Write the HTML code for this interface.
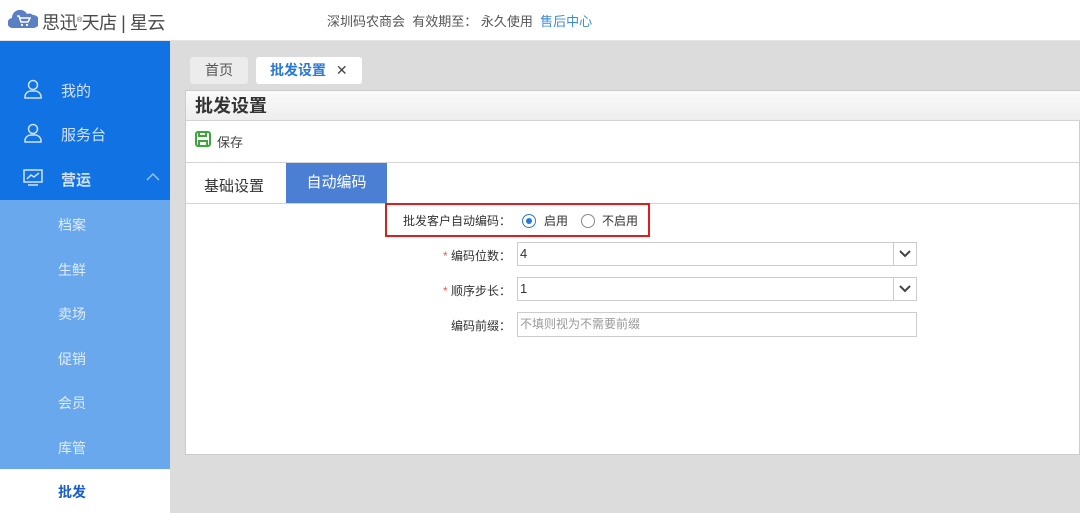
<!DOCTYPE html><html><head><meta charset="utf-8"><style>
*{margin:0;padding:0;box-sizing:border-box}
body{width:1080px;height:513px;overflow:hidden;font-family:"Liberation Sans","Noto Sans CJK SC",sans-serif;background:#dcdcdc;position:relative;color:#333}
.a{position:absolute}
.hdr{left:0;top:0;width:1080px;height:41px;background:#fff;border-bottom:1px solid #e4e4e4}
.side{left:0;top:41px;width:170px;height:472px;background:#1172e3}
.sub{left:0;top:200px;width:170px;height:269px;background:#6aa8ee}
.act{left:0;top:469px;width:170px;height:44px;background:#fff}
.mi{color:#cfe2fb;font-size:15px;left:61px}
.si{color:#e0ecfb;font-size:14px;left:58px}
.panel{left:185px;top:90px;width:895px;height:365px;background:#fff;border:1px solid #ccc}
</style></head><body>
<div class="a hdr"></div>
<svg class="a" style="left:8px;top:9px" width="30" height="20" viewBox="0 0 30 20"><path d="M5 19a5 5 0 0 1-1-10 8 8 0 0 1 15-4 6 6 0 0 1 6 1 6.5 6.5 0 0 1 0 13z" fill="#5b7fc4"/><path d="M9 7h2l2 6h7l2-4h-10" stroke="#fff" stroke-width="1.5" fill="none"/><circle cx="14" cy="16" r="1.1" fill="#fff"/><circle cx="19" cy="16" r="1.1" fill="#fff"/></svg>
<div class="a" style="left:42px;top:9px;font-size:18px;color:#4a4a4a;letter-spacing:-0.5px">思迅<sup style="font-size:7px">®</sup>天店 | 星云</div>
<div class="a" style="left:327px;top:11px;font-size:13px;color:#555">深圳码农商会&nbsp;&nbsp;有效期至： 永久使用&nbsp;&nbsp;<span style="color:#3a8ad6">售后中心</span></div>
<div class="a side"></div><div class="a sub"></div><div class="a act"></div>
<svg class="a" style="left:23px;top:79px" width="20" height="20" viewBox="0 0 20 20" fill="none" stroke="#cfe2fb" stroke-width="1.5"><circle cx="10" cy="6" r="4.5"/><path d="M2 19v-2a6 6 0 0 1 6-5h4a6 6 0 0 1 6 5v2z"/></svg>
<div class="a mi" style="top:80px">我的</div>
<svg class="a" style="left:23px;top:123px" width="20" height="20" viewBox="0 0 20 20" fill="none" stroke="#cfe2fb" stroke-width="1.5"><circle cx="10" cy="6" r="4.5"/><path d="M2 19v-2a6 6 0 0 1 6-5h4a6 6 0 0 1 6 5v2z"/></svg>
<div class="a mi" style="top:124px">服务台</div>
<svg class="a" style="left:23px;top:169px" width="20" height="18" viewBox="0 0 20 18" fill="none" stroke="#cfe2fb" stroke-width="1.5"><rect x="1" y="1" width="18" height="12"/><path d="M4 10l4-4 3 2 5-4M5 16h10"/></svg>
<div class="a mi" style="top:169px;font-weight:bold">营运</div>
<svg class="a" style="left:146px;top:172px" width="14" height="9" viewBox="0 0 14 9" fill="none" stroke="#9cc4f2" stroke-width="1.4"><path d="M1 8l6-6 6 6"/></svg>
<div class="a si" style="top:215px">档案</div>
<div class="a si" style="top:260px">生鲜</div>
<div class="a si" style="top:304px">卖场</div>
<div class="a si" style="top:349px">促销</div>
<div class="a si" style="top:393px">会员</div>
<div class="a si" style="top:438px">库管</div>
<div class="a" style="left:58px;top:482px;font-size:14px;color:#1a5fc7;font-weight:bold">批发</div>
<div class="a" style="left:190px;top:57px;width:58px;height:27px;background:#ececec;border-radius:3px;font-size:14px;color:#555;text-align:center;line-height:27px">首页</div>
<div class="a" style="left:256px;top:57px;width:106px;height:27px;background:#fff;border-radius:3px;font-size:14px;color:#2a78d6;line-height:27px;padding-left:14px;font-weight:bold">批发设置 <span style="color:#444;margin-left:6px;font-weight:normal">✕</span></div>
<div class="a panel"></div>
<div class="a" style="left:186px;top:91px;width:894px;height:30px;background:linear-gradient(#fafafa,#eee);border-bottom:1px solid #d4d4d4;font-size:18px;font-weight:bold;color:#333;padding-left:9px;line-height:30px">批发设置</div>
<svg class="a" style="left:195px;top:131px" width="16" height="16" viewBox="0 0 16 16" fill="none" stroke="#3aa73a" stroke-width="2"><rect x="1" y="1" width="14" height="14" rx="2"/><path d="M4 1v4h7V1M4 15v-5h8v5"/></svg>
<div class="a" style="left:217px;top:132px;font-size:13px;color:#444">保存</div>
<div class="a" style="left:186px;top:162px;width:894px;height:1px;background:#d4d4d4"></div>
<div class="a" style="left:186px;top:203px;width:894px;height:1px;background:#d4d4d4"></div>
<div class="a" style="left:204px;top:175px;font-size:15px;color:#333">基础设置</div>
<div class="a" style="left:286px;top:163px;width:101px;height:40px;background:#4a7fd4;color:#fff;font-size:15px;text-align:center;line-height:40px">自动编码</div>
<div class="a" style="left:385px;top:203px;width:265px;height:34px;border:2px solid #e21b1b"></div>
<div class="a" style="left:403px;top:212px;font-size:12px;color:#333">批发客户自动编码：</div>
<div class="a" style="left:522px;top:214px;width:14px;height:14px;border:1px solid #2a78d6;border-radius:50%"></div>
<div class="a" style="left:526px;top:218px;width:6px;height:6px;background:#2a78d6;border-radius:50%"></div>
<div class="a" style="left:544px;top:212px;font-size:12px;color:#333">启用</div>
<div class="a" style="left:581px;top:214px;width:14px;height:14px;border:1px solid #888;border-radius:50%"></div>
<div class="a" style="left:602px;top:212px;font-size:12px;color:#333">不启用</div>
<div class="a" style="left:443px;top:247px;font-size:12px;color:#333"><span style="color:#e55">*</span> 编码位数：</div>
<div class="a" style="left:517px;top:242px;width:400px;height:24px;border:1px solid #ccc;font-size:13px;padding-left:2px;line-height:22px">4</div>
<div class="a" style="left:893px;top:243px;width:1px;height:22px;background:#ccc"></div>
<svg class="a" style="left:899px;top:250px" width="12" height="8" viewBox="0 0 12 8" fill="none" stroke="#444" stroke-width="2"><path d="M1 1l5 5 5-5"/></svg>
<div class="a" style="left:443px;top:282px;font-size:12px;color:#333"><span style="color:#e55">*</span> 顺序步长：</div>
<div class="a" style="left:517px;top:277px;width:400px;height:24px;border:1px solid #ccc;font-size:13px;padding-left:2px;line-height:22px">1</div>
<div class="a" style="left:893px;top:278px;width:1px;height:22px;background:#ccc"></div>
<svg class="a" style="left:899px;top:285px" width="12" height="8" viewBox="0 0 12 8" fill="none" stroke="#444" stroke-width="2"><path d="M1 1l5 5 5-5"/></svg>
<div class="a" style="left:451px;top:317px;font-size:12px;color:#333">编码前缀：</div>
<div class="a" style="left:517px;top:312px;width:400px;height:25px;border:1px solid #ccc;font-size:12px;color:#999;padding-left:2px;line-height:23px">不填则视为不需要前缀</div>
</body></html>
